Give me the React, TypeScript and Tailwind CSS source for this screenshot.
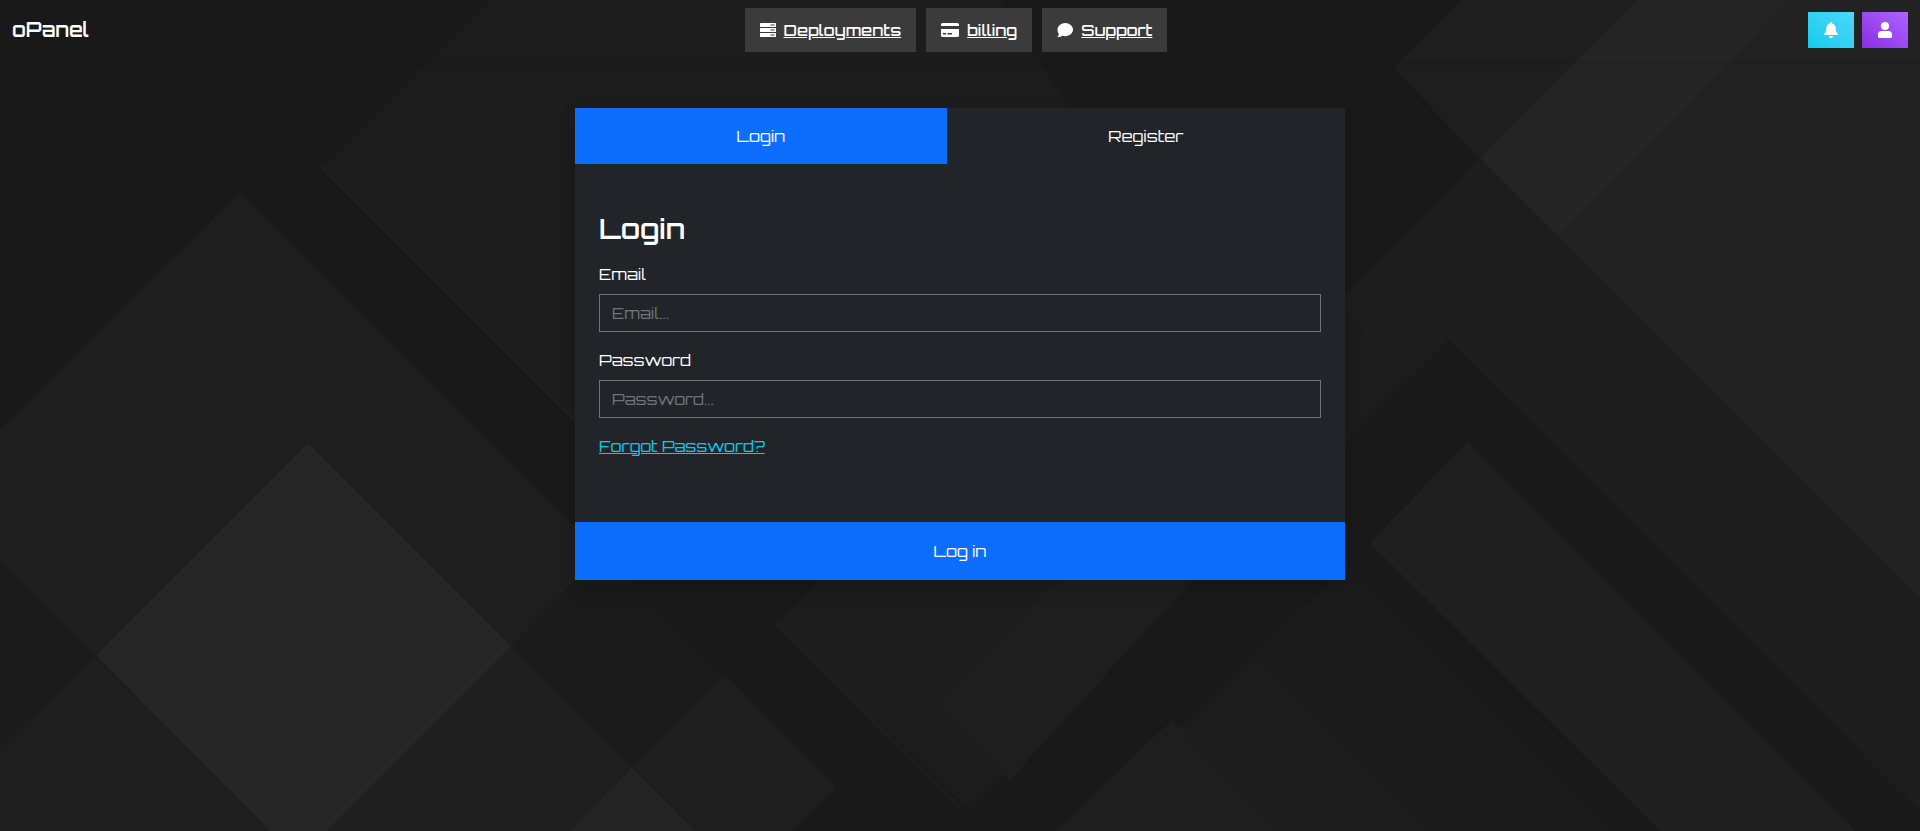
import { useState } from 'react';

type TabType = 'login' | 'register';

const facets = [
    { points: '330,0 1000,0 1130,200 1130,420 575,420 322,168 490,0', fill: '#1c1c1c' },
    { points: '240,192 770,722 660,831 0,831 0,430', fill: '#1e1e1e' },
    { points: '511,646 575,580 630,580 725,675 632,768', fill: '#1a1a1a' },
    { points: '0,562 95,655 0,748', fill: '#1a1a1a' },
    { points: '308,443 511,646 326,831 270,831 96,655', fill: '#262626' },
    { points: '725,675 836,787 792,831 695,831 632,768', fill: '#1e1e1e' },
    { points: '632,768 695,831 570,831', fill: '#242424' },
    { points: '777,624 830,570 1205,570 970,811', fill: '#1c1c1c' },
    { points: '937,702 1060,580 1192,580 1010,780', fill: '#1e1e1e' },
    { points: '1254,655 1345,565 1611,831 1430,831', fill: '#1b1b1b' },
    { points: '1254,655 1430,831 1275,831 1178,731', fill: '#1c1c1c' },
    { points: '1172,720 1280,831 1056,831', fill: '#1e1e1e' },
    { points: '1467,442 1856,831 1660,831 1370,543', fill: '#1f1f1f' },
    { points: '1393,68 1462,0 1640,0 1480,158', fill: '#1e1e1e' },
    { points: '1480,158 1920,598 1920,812 1374,265', fill: '#1d1d1d' },
    { points: '1374,265 1448,340 1410,378 1345,310 1345,294', fill: '#1d1d1d' },
    { points: '1345,310 1410,378 1345,443', fill: '#1c1c1c' },
    { points: '1480,158 1638,0 1920,0 1920,598', fill: '#222222' },
    { points: '1480,158 1638,0 1790,0 1558,236', fill: '#252525' },
];

export default function App() {
    const [activeTab, setActiveTab] = useState<TabType>('login');

    return (
        <div className="relative isolate min-h-screen bg-[#191919] font-['Orbitron','DejaVu_Sans',sans-serif] text-base text-white">
            <Backdrop />

            <header className="grid grid-cols-[1fr_auto_1fr] items-center px-3 py-2 shadow-[0_2px_8px_rgba(0,0,0,0.1)]">
                <a href="#" className="text-xl font-semibold">oPanel</a>
                <nav className="flex gap-2.5 pr-2">
                    <NavLink href="#deployments" label="Deployments" icon={<ServerIcon />} />
                    <NavLink href="#billing" label="billing" icon={<CardIcon />} />
                    <NavLink href="#support" label="Support" icon={<ChatIcon />} />
                </nav>
                <div className="flex justify-end gap-2">
                    <button
                        aria-label="Notifications"
                        className="flex h-9 w-[46px] items-center justify-center bg-linear-to-tr from-[#0dcaf0] to-[#4ad8f8]"
                    >
                        <BellIcon />
                    </button>
                    <button
                        aria-label="Account"
                        className="flex h-9 w-[46px] items-center justify-center bg-linear-to-tr from-[#8a2be2] to-[#ae63ff]"
                    >
                        <UserIcon />
                    </button>
                </div>
            </header>

            <main className="mx-auto mt-12 w-full max-w-[770px] bg-[#212529] shadow-[0_8px_16px_rgba(0,0,0,0.15)]">
                <div className="flex">
                    <button
                        onClick={() => setActiveTab('login')}
                        className={cn('flex-auto p-4', activeTab === 'login' && 'bg-[#0d6efd]')}
                    >
                        Login
                    </button>
                    <button
                        onClick={() => setActiveTab('register')}
                        className={cn('flex-auto p-4', activeTab === 'register' && 'bg-[#0d6efd]')}
                    >
                        Register
                    </button>
                </div>

                <form onSubmit={(e) => e.preventDefault()}>
                    <div className="px-6 pt-12 pb-16">
                        <h1 className="mb-4 text-[28px] leading-[34px] font-semibold">
                            {activeTab === 'login' ? 'Login' : 'Register'}
                        </h1>
                        <Field id="email" type="email" label="Email" />
                        <Field id="password" type="password" label="Password" />
                        <a href="#forgot" className="block w-fit text-[#0dcaf0] underline">Forgot Password?</a>
                    </div>
                    <button type="submit" className="w-full bg-[#0d6efd] py-[17px]">
                        {activeTab === 'login' ? 'Log in' : 'Register'}
                    </button>
                </form>
            </main>
        </div>
    );
}

function NavLink({ href, label, icon }: { href: string; label: string; icon: React.ReactNode }) {
    return (
        <a href={href} className="flex h-11 items-center gap-2 bg-[#3b3b3b] px-[15px] font-medium">
            {icon}
            <span className="underline">{label}</span>
        </a>
    );
}

function Field({ id, type, label }: { id: string; type: string; label: string }) {
    return (
        <div className="mb-4">
            <label htmlFor={id} className="mb-2 block">{label}</label>
            <input
                id={id}
                type={type}
                placeholder={`${label}...`}
                className="block h-[38px] w-full border border-[#6c757d] bg-transparent px-3 placeholder:text-[#6c757d]"
            />
        </div>
    );
}

function Backdrop() {
    return (
        <svg
            className="absolute inset-0 -z-10 h-full w-full"
            viewBox="0 0 1920 831"
            preserveAspectRatio="xMidYMid slice"
            aria-hidden="true"
        >
            {facets.map((facet) => (
                <polygon key={facet.points} points={facet.points} fill={facet.fill} />
            ))}
            <path d="M322 168L575 420M1515 398L1920 803M777 624L960 807" stroke="#1e1e1e" strokeWidth="4" />
        </svg>
    );
}

function ServerIcon() {
    return (
        <svg width="16" height="16" viewBox="0 0 16 16" fill="currentColor" aria-hidden="true">
            <rect y="1" width="16" height="4" rx="0.6" />
            <rect y="6" width="16" height="4" rx="0.6" />
            <rect y="11" width="16" height="4" rx="0.6" />
            <path d="M10.500 2h4v2h-4zM10.500 7h4v2h-4zM10.500 12h4v2h-4z" fill="#9a9a9a" />
        </svg>
    );
}

function CardIcon() {
    return (
        <svg width="18" height="16" viewBox="0 0 18 16" fill="currentColor" aria-hidden="true">
            <path d="M1.600 1h14.800A1.600 1.600 0 0 1 18 2.600V4H0V2.600A1.600 1.600 0 0 1 1.600 1z" />
            <path fillRule="evenodd" d="M0 7h18v6.400a1.600 1.600 0 0 1-1.600 1.600H1.600A1.600 1.600 0 0 1 0 13.400zM2 11v1.500h3V11zm4.500 0v1.500H11V11z" />
        </svg>
    );
}

function ChatIcon() {
    return (
        <svg width="16" height="16" viewBox="0 0 16 16" fill="currentColor" aria-hidden="true">
            <path d="M8.300 1C12.600 1 16 4 16 7.600s-3.400 6.600-7.700 6.600c-1.100 0-2.100-.2-3-.5C4.300 14.500 2.500 15 .4 15c.8-.9 1.400-2 1.500-3C.9 10.900.5 9.300.5 7.600.5 4 4 1 8.300 1z" />
        </svg>
    );
}

function BellIcon() {
    return (
        <svg width="14" height="16" viewBox="0 0 14 16" fill="currentColor" aria-hidden="true">
            <path d="M7 0a1 1 0 0 0-1 1v.6C3.700 2.100 2.300 4 2.300 6.200c0 3-.8 4.300-2 5.300-.5.600-.2 1.500.7 1.500h12c.9 0 1.200-.9.7-1.500-1.200-1-2-2.300-2-5.300C11.700 4 10.300 2.100 8 1.600V1a1 1 0 0 0-1-1zM5 14a2 2 0 0 0 4 0z" />
        </svg>
    );
}

function UserIcon() {
    return (
        <svg width="14" height="16" viewBox="0 0 14 16" fill="currentColor" aria-hidden="true">
            <circle cx="7" cy="4" r="4" />
            <path d="M3.500 9h7A3.500 3.500 0 0 1 14 12.500v2a1.500 1.500 0 0 1-1.500 1.500h-11A1.500 1.500 0 0 1 0 14.500v-2A3.500 3.500 0 0 1 3.500 9z" />
        </svg>
    );
}

function cn(...classes: any[]) {
    return classes.filter(Boolean).join(' ');
}
